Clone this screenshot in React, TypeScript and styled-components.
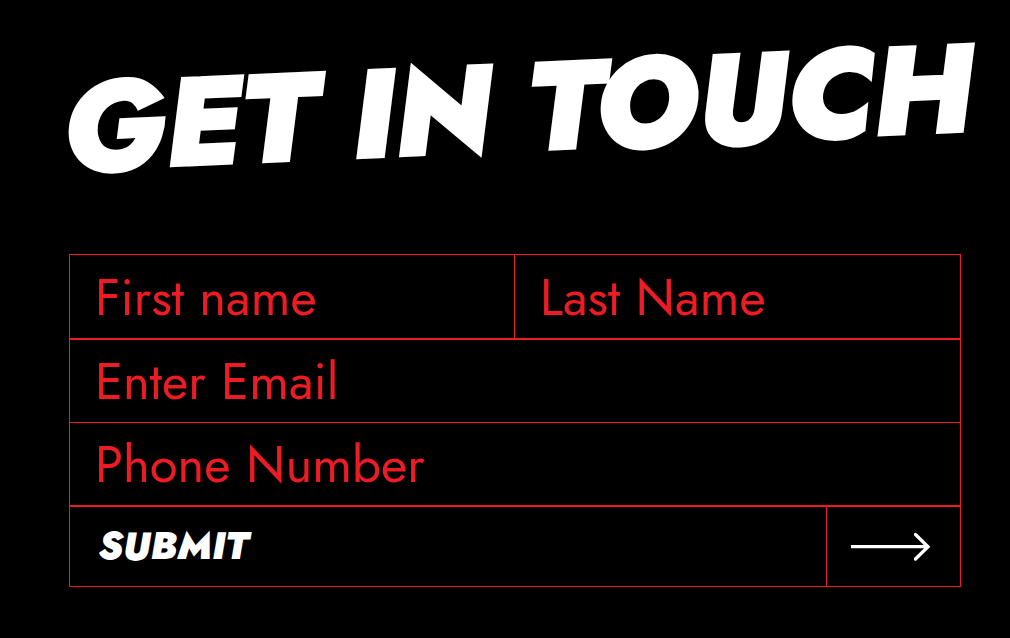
import React from 'react';
import styled, { createGlobalStyle } from 'styled-components';

const Global = createGlobalStyle`
  * { box-sizing: border-box; }
  body { margin: 0; background: #000; }
`;
const red = '#ed1c24';
const font = `Jost, Futura, Lato, "Open Sans", sans-serif`;
const Section = styled.main`
  padding: 32px 49px 48px 69px;
  font-family: ${font};
`;
const Title = styled.h1`
  margin: 0 -20px 70px -8px;
  color: #fff;
  font-size: 128px;
  line-height: 152px;
  font-weight: 900;
  font-style: italic;
  letter-spacing: -0.02em;
  white-space: nowrap;
  transform: rotate(-2.5deg);
`;
const Form = styled.form`
  border: 1px solid ${red};
`;
const Row = styled.div<{ $rule?: number }>`
  display: flex;
  border-bottom: ${(p) => p.$rule ?? 1}px solid ${red};
`;
const Input = styled.input`
  flex: 1 1 50%;
  min-width: 0;
  height: 82px;
  padding: 0 25px;
  border: 0;
  border-radius: 0;
  outline: 0;
  background: transparent;
  color: ${red};
  font-family: ${font};
  font-size: 51px;
  &::placeholder { color: ${red}; opacity: 1; }
  &:not(:last-child) { border-right: 1px solid ${red}; }
  ${Row}:first-child & { height: 83px; }
`;
const Submit = styled.button`
  display: flex;
  width: 100%;
  height: 79px;
  padding: 0;
  border: 0;
  background: transparent;
  color: #fff;
  font-family: ${font};
  font-size: 38px;
  font-weight: 900;
  font-style: italic;
  text-align: left;
`;
const Label = styled.span`
  flex: 1;
  align-self: center;
  padding: 0 0 2px 28px;
`;
const ArrowCell = styled.span`
  display: flex;
  align-items: center;
  width: 134px;
  height: 100%;
  padding-left: 24px;
  border-left: 1px solid ${red};
`;

export default function App() {
  return (
    <Section>
      <Global />
      <Title>GET IN TOUCH</Title>
      <Form onSubmit={(e) => e.preventDefault()}>
        <Row $rule={2}>
          <Input aria-label="First name" placeholder="First name" />
          <Input aria-label="Last Name" placeholder="Last Name" />
        </Row>
        <Row>
          <Input type="email" aria-label="Enter Email" placeholder="Enter Email" />
        </Row>
        <Row $rule={2}>
          <Input type="tel" aria-label="Phone Number" placeholder="Phone Number" />
        </Row>
        <Submit type="submit">
          <Label>SUBMIT</Label>
          <ArrowCell>
            <svg width="80" height="30" viewBox="0 0 80 30" fill="none" stroke="#fff" strokeWidth="3.3" aria-hidden="true">
              <path d="M0 14.7H77" />
              <path d="M64.5 2.5L77 14.7L64.5 27" strokeLinecap="round" />
            </svg>
          </ArrowCell>
        </Submit>
      </Form>
    </Section>
  );
}
